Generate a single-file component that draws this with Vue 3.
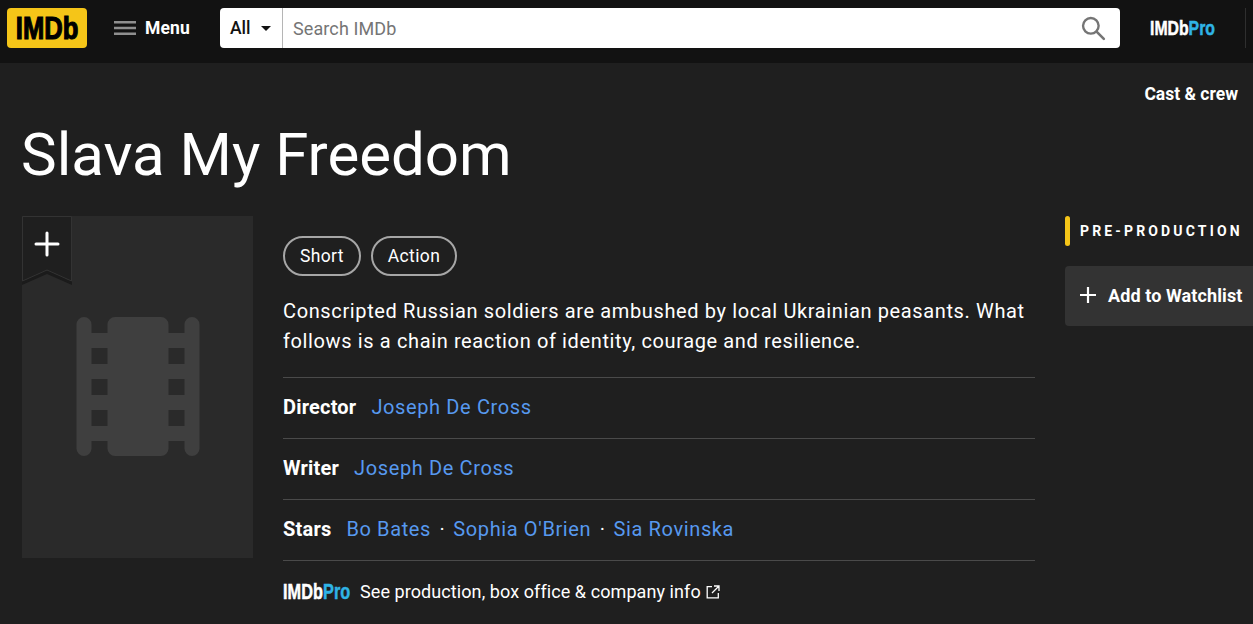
<script setup>
const genres = ['Short', 'Action']
const credits = [
  { label: 'Director', names: ['Joseph De Cross'] },
  { label: 'Writer', names: ['Joseph De Cross'] },
  { label: 'Stars', names: ['Bo Bates', "Sophia O'Brien", 'Sia Rovinska'] }
]
</script>

<template>
  <div class="page">
    <header class="navbar">
      <a class="logo"><span class="logo-text">IMDb</span></a>
      <a class="menu">
        <svg class="menu-icon" width="24" height="24" viewBox="0 0 24 24">
          <path fill="#8f8f8f" d="M1 5h22v2.400H1zM1 10.800h22v2.400H1zM1 16.600h22v2.400H1z" />
        </svg>
        <span>Menu</span>
      </a>
      <div class="search">
        <div class="search-cat">
          <span>All</span>
          <span class="caret"></span>
        </div>
        <div class="search-input">Search IMDb</div>
        <svg class="search-icon" width="24" height="24" viewBox="0 0 24 24">
          <circle cx="10" cy="10" r="7.200" fill="none" stroke="#757575" stroke-width="2.200" />
          <path d="M15.300 15.300 22 22" stroke="#757575" stroke-width="2.400" stroke-linecap="round" />
        </svg>
      </div>
      <a class="pro-logo">IMDb<span>Pro</span></a>
      <div class="nav-divider"></div>
    </header>

    <main class="hero">
      <div class="top-links">Cast &amp; crew</div>
      <h1 class="title">Slava My Freedom</h1>

      <div class="body-row">
        <div class="poster">
          <div class="ribbon">
            <svg width="50" height="70" viewBox="0 0 50 70">
              <path d="M0 65 25 54l25 11v4L25 58 0 69z" fill="#1b1b1b" />
              <path d="M.5 .5h49v64.500L25 54 .5 65z" fill="#1f1f1f" stroke="#333" />
              <path d="M25 17v22M14 28h22" stroke="#fff" stroke-width="3" stroke-linecap="round" />
            </svg>
          </div>
          <svg class="reel" width="124" height="140" viewBox="0 0 124 140">
            <path
              fill="#3f3f3f"
              fill-rule="evenodd"
              d="M8 0a7.500 7.500 0 0 1 7.500 7.500V16h16V7.500A7.500 7.500 0 0 1 39 0h46a7.500 7.500 0 0 1 7.500 7.500V16h16V7.500a7.500 7.500 0 0 1 15 0v124a7.500 7.500 0 0 1-15 0V124h-16v7.500A7.500 7.500 0 0 1 85 139H39a7.500 7.500 0 0 1-7.500-7.500V124h-16v7.500a7.500 7.500 0 0 1-15 0V7.500A7.500 7.500 0 0 1 8 0zM15.500 31v16h16V31zM92.500 31v16h16V31zM15.500 62v16h16V62zM92.500 62v16h16V62zM15.500 93v16h16V93zM92.500 93v16h16V93z"
            />
          </svg>
        </div>

        <section class="details">
          <div class="chips">
            <span v-for="g in genres" :key="g" class="chip">{{ g }}</span>
          </div>
          <p class="plot">
            Conscripted Russian soldiers are ambushed by local Ukrainian peasants. What follows is a chain reaction of identity, courage and resilience.
          </p>
          <div v-for="c in credits" :key="c.label" class="credit">
            <span class="credit-label">{{ c.label }}</span>
            <span class="credit-names">
              <template v-for="(n, i) in c.names" :key="n">
                <span v-if="i > 0" class="dot">·</span>
                <a class="name">{{ n }}</a>
              </template>
            </span>
          </div>
          <div class="pro-row">
            <span class="pro-logo small">IMDb<span>Pro</span></span>
            <span class="pro-text">See production, box office &amp; company info</span>
            <svg width="14" height="14" viewBox="0 0 14 14" fill="none" stroke="#fff" stroke-width="1.300">
              <path d="M6 1.700H1.200v11.100h11.100V8M8 1h5v5M13 1 6 8" />
            </svg>
          </div>
        </section>

        <aside class="side">
          <div class="status"><span class="status-bar"></span>PRE-PRODUCTION</div>
          <button class="watch-btn">
            <svg width="24" height="24" viewBox="0 0 24 24">
              <path d="M12 4v16M4 12h16" stroke="#fff" stroke-width="2.200" />
            </svg>
            <span>Add to Watchlist</span>
          </button>
        </aside>
      </div>
    </main>
  </div>
</template>

<style>
html,
body {
  margin: 0;
  overflow: hidden;
  background: #1f1f1f;
}
</style>

<style scoped>
.page {
  font-family: Roboto, "Liberation Sans", sans-serif;
  color: #fff;
  height: 624px;
  overflow: hidden;
}

.navbar {
  display: flex;
  align-items: center;
  height: 63px;
  padding: 0 7px 7px;
  box-sizing: border-box;
  background: #121212;
}

.logo {
  display: flex;
  align-items: center;
  justify-content: center;
  width: 80px;
  height: 40px;
  flex: none;
  border-radius: 4px;
  background: #f5c518;
  color: #000;
  font-family: "Liberation Sans", sans-serif;
}

.logo-text {
  display: inline-block;
  font-weight: 700;
  font-size: 32px;
  line-height: 40px;
  transform: scaleX(0.8);
  -webkit-text-stroke: 1.200px #000;
}

.menu {
  display: flex;
  align-items: center;
  gap: 8px;
  margin-left: 26px;
  width: 107px;
  flex: none;
  font-size: 17.500px;
  font-weight: 700;
  letter-spacing: 0.1px;
}

.search {
  display: flex;
  align-items: center;
  width: 900px;
  height: 40px;
  flex: none;
  border-radius: 4px;
  background: #fff;
  color: #121212;
}

.search-cat {
  display: flex;
  align-items: center;
  gap: 10px;
  width: 63px;
  height: 100%;
  box-sizing: border-box;
  padding-left: 10px;
  border-right: 1px solid #b5b5b5;
  font-size: 17.500px;
  font-weight: 500;
}

.caret {
  width: 0;
  height: 0;
  border-left: 5px solid transparent;
  border-right: 5px solid transparent;
  border-top: 5px solid #121212;
}

.search-input {
  flex: 1;
  padding-left: 10px;
  font-size: 18px;
  letter-spacing: 0.1px;
  color: #757575;
}

.search-icon {
  margin-right: 14px;
  width: 26px;
  height: 26px;
}

.pro-logo {
  margin-left: 30px;
  width: 65px;
  flex: none;
  font-family: "Liberation Sans", sans-serif;
  font-size: 20px;
  font-weight: 700;
  color: #fff;
  white-space: nowrap;
  transform: scaleX(0.79);
  transform-origin: left center;
  -webkit-text-stroke: 0.5px currentColor;
}

.pro-logo span {
  color: #2fb4e6;
}

.pro-logo.small {
  margin-left: 0;
  width: 67px;
  margin-right: 10px;
  font-size: 22px;
  transform: scaleX(0.74);
}

.nav-divider {
  width: 2px;
  height: 40px;
  margin-left: 30px;
  background: #2f2f2f;
}

.hero {
  padding: 0 0 0 22px;
}

.top-links {
  display: flex;
  justify-content: flex-end;
  padding: 20px 15px 0 0;
  font-size: 17.500px;
  line-height: 22px;
  font-weight: 700;
}

.title {
  margin: 14px 0 0 -1px;
  font-size: 60px;
  line-height: 72px;
  font-weight: 400;
}

.body-row {
  display: flex;
  margin-top: 25px;
}

.poster {
  position: relative;
  display: flex;
  align-items: center;
  justify-content: center;
  width: 231px;
  height: 342px;
  flex: none;
  background: #2a2a2a;
}

.ribbon {
  position: absolute;
  top: 0;
  left: 0;
  height: 70px;
}

.reel {
  display: block;
}

.details {
  width: 752px;
  flex: none;
  margin-left: 30px;
  padding-top: 20px;
}

.chips {
  display: flex;
  gap: 10px;
}

.chip {
  height: 40px;
  box-sizing: border-box;
  padding: 0 15px;
  border: 2px solid #a6a6a6;
  border-radius: 20px;
  font-size: 17.500px;
  line-height: 36px;
  letter-spacing: 0.35px;
}

.plot {
  margin: 20px 0 0;
  padding-bottom: 21px;
  font-size: 20px;
  line-height: 30px;
  letter-spacing: 0.625px;
}

.credit {
  display: flex;
  align-items: center;
  height: 61px;
  padding-bottom: 2px;
  border-top: 1px solid #4a4a4a;
  box-sizing: border-box;
  font-size: 20px;
}

.credit-label {
  font-weight: 700;
  margin-right: 15px;
  letter-spacing: 0.2px;
}

.name {
  color: #5799ef;
  letter-spacing: 0.625px;
}

.dot {
  margin: 0 8.500px;
}

.pro-row {
  display: flex;
  align-items: center;
  height: 62px;
  box-sizing: border-box;
  border-top: 1px solid #4a4a4a;
  font-size: 18px;
  letter-spacing: 0.08px;
}

.pro-text {
  margin-right: 5px;
}

.side {
  flex: 1;
  margin-left: 30px;
  min-width: 0;
}

.status {
  display: flex;
  align-items: center;
  height: 30px;
  font-size: 14px;
  font-weight: 700;
  letter-spacing: 3.150px;
  white-space: nowrap;
}

.status-bar {
  width: 5px;
  height: 30px;
  margin-right: 10px;
  border-radius: 3px;
  background: #f5c518;
}

.watch-btn {
  display: flex;
  align-items: center;
  gap: 8px;
  width: 188px;
  height: 60px;
  margin-top: 20px;
  padding: 0 0 2px 11px;
  border: 0;
  border-radius: 4px 0 0 4px;
  background: #333;
  color: #fff;
  font-family: inherit;
  font-size: 18px;
  font-weight: 700;
  letter-spacing: 0.1px;
  white-space: nowrap;
}
</style>
